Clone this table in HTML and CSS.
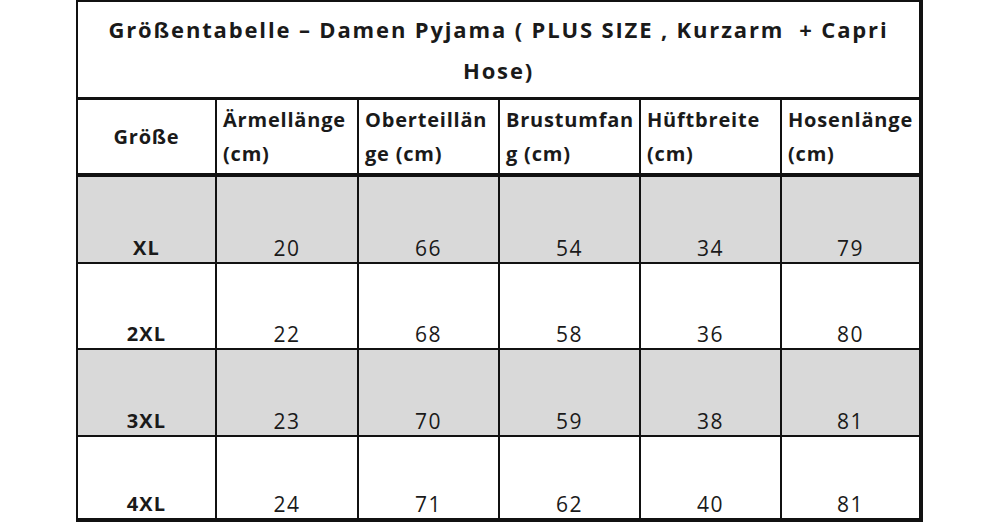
FILE: index.html
```html
<!DOCTYPE html>
<html lang="de">
<head>
<meta charset="utf-8">
<title>Größentabelle – Damen Pyjama</title>
<link rel="stylesheet" href="styles.css">
</head>
<body>
<div class="sheet" role="table">
  <div class="title" role="caption">Größentabelle – Damen Pyjama ( PLUS SIZE , Kurzarm&nbsp; + Capri<br>Hose)</div>

  <div class="cell head first centered" role="columnheader">Größe</div>
  <div class="cell head" role="columnheader">Ärmellänge<br>(cm)</div>
  <div class="cell head" role="columnheader">Oberteillän<br>ge (cm)</div>
  <div class="cell head" role="columnheader">Brustumfan<br>g (cm)</div>
  <div class="cell head" role="columnheader">Hüftbreite<br>(cm)</div>
  <div class="cell head last" role="columnheader">Hosenlänge<br>(cm)</div>

  <div class="cell data shade first size">XL</div>
  <div class="cell data shade">20</div>
  <div class="cell data shade">66</div>
  <div class="cell data shade">54</div>
  <div class="cell data shade">34</div>
  <div class="cell data shade last">79</div>

  <div class="cell data first size">2XL</div>
  <div class="cell data">22</div>
  <div class="cell data">68</div>
  <div class="cell data">58</div>
  <div class="cell data">36</div>
  <div class="cell data last">80</div>

  <div class="cell data shade first size">3XL</div>
  <div class="cell data shade">23</div>
  <div class="cell data shade">70</div>
  <div class="cell data shade">59</div>
  <div class="cell data shade">38</div>
  <div class="cell data shade last">81</div>

  <div class="cell data first size bottom">4XL</div>
  <div class="cell data bottom">24</div>
  <div class="cell data bottom">71</div>
  <div class="cell data bottom">62</div>
  <div class="cell data bottom">40</div>
  <div class="cell data last bottom">81</div>
</div>
</body>
</html>
```

FILE: styles.css
```css
* {
  box-sizing: border-box;
}

html, body {
  margin: 0;
  padding: 0;
  background: #ffffff;
}

body {
  font-family: "Open Sans", "Liberation Sans", sans-serif;
  color: #1a1a1a;
}

.sheet {
  display: grid;
  grid-template-columns: 141px 142px 141px 141px 141px 141px;
  grid-template-rows: 100px 77px 87px 86px 87px 85px;
  margin-left: 76px;
  width: 847px;
}

.title {
  grid-column: 1 / -1;
  display: flex;
  align-items: center;
  justify-content: center;
  text-align: center;
  font-size: 22px;
  font-weight: 700;
  letter-spacing: 1.85px;
  line-height: 41px;
  border-top: 2px solid #111;
  border-left: 2px solid #111;
  border-right: 4px solid #111;
  border-bottom: 3px solid #111;
}

.cell {
  display: flex;
  border-right: 2px solid #111;
  border-bottom: 2px solid #111;
  font-size: 20px;
}

.cell.first {
  border-left: 2px solid #111;
}

.cell.last {
  border-right: 4px solid #111;
}

.head {
  align-items: center;
  padding-left: 6px;
  font-weight: 700;
  letter-spacing: 0.8px;
  line-height: 34px;
  border-bottom-width: 4px;
}

.head.centered {
  justify-content: center;
  padding-left: 0;
}

.data {
  align-items: flex-end;
  justify-content: center;
  font-size: 21px;
  letter-spacing: 1.6px;
  line-height: 24px;
  padding-bottom: 2px;
}

.data.size {
  font-weight: 700;
  font-size: 20px;
  letter-spacing: 1.2px;
}

.shade {
  background: #d9d9d9;
}

.bottom {
  border-bottom-width: 4px;
}
```
